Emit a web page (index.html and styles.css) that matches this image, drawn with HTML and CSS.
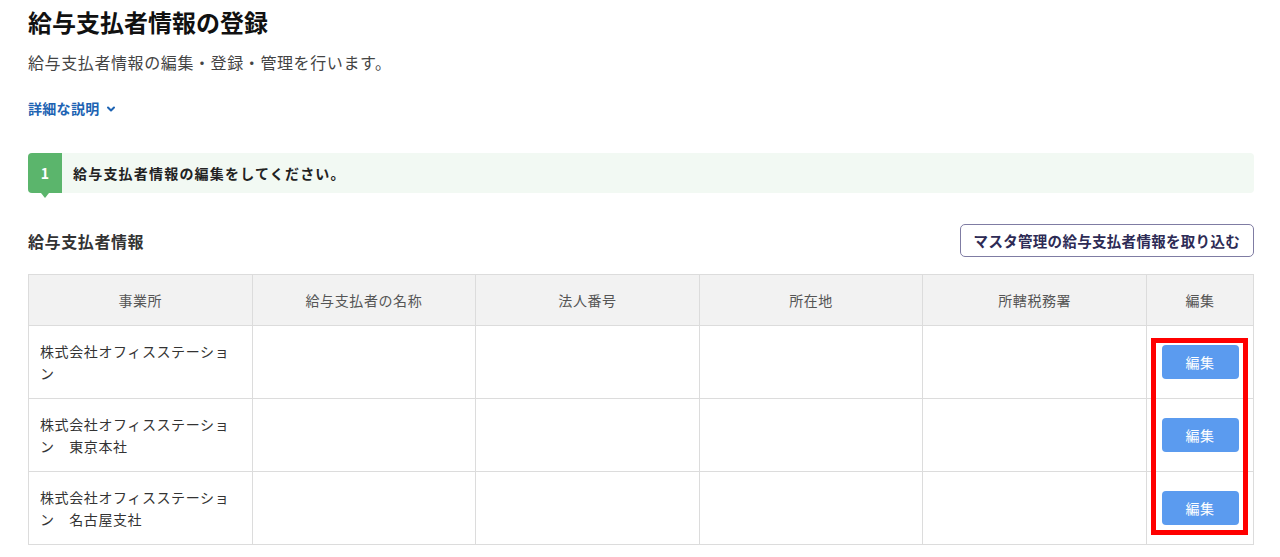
FILE: index.html
```html
<!DOCTYPE html>
<html lang="ja">
<head>
    <meta charset="UTF-8">
    <meta name="viewport" content="width=device-width, initial-scale=1.0">
    <title>給与支払者情報の登録</title>
    <link rel="stylesheet" href="styles.css">
</head>
<body>
    <main class="page">
        <h1 class="title">給与支払者情報の登録</h1>
        <p class="lead">給与支払者情報の編集・登録・管理を行います。</p>
        <a class="more" href="#">詳細な説明
            <svg class="chevron" viewBox="0 0 10 10" width="10" height="10"><path d="M2 3.5 L5 6.5 L8 3.5" fill="none" stroke="currentColor" stroke-width="2" stroke-linecap="round" stroke-linejoin="round"/></svg>
        </a>

        <div class="step">
            <span class="step-num">1</span>
            <p class="step-text">給与支払者情報の編集をしてください。</p>
        </div>

        <div class="section-head">
            <h2 class="section-title">給与支払者情報</h2>
            <button class="import" type="button">マスタ管理の給与支払者情報を取り込む</button>
        </div>

        <div class="table-wrap">
            <table class="payers">
                <thead>
                    <tr>
                        <th class="col">事業所</th>
                        <th class="col">給与支払者の名称</th>
                        <th class="col">法人番号</th>
                        <th class="col">所在地</th>
                        <th class="col">所轄税務署</th>
                        <th class="col-edit">編集</th>
                    </tr>
                </thead>
                <tbody>
                    <tr>
                        <td>株式会社オフィスステーション</td>
                        <td></td><td></td><td></td><td></td>
                        <td class="edit-cell"><button class="edit" type="button">編集</button></td>
                    </tr>
                    <tr>
                        <td>株式会社オフィスステーション　東京本社</td>
                        <td></td><td></td><td></td><td></td>
                        <td class="edit-cell"><button class="edit" type="button">編集</button></td>
                    </tr>
                    <tr>
                        <td>株式会社オフィスステーション　名古屋支社</td>
                        <td></td><td></td><td></td><td></td>
                        <td class="edit-cell"><button class="edit" type="button">編集</button></td>
                    </tr>
                </tbody>
            </table>
            <div class="highlight"></div>
        </div>
    </main>
</body>
</html>
```

FILE: styles.css
```css
body {
    margin: 0;
    font-family: "Noto Sans CJK JP", "Noto Sans", sans-serif;
    color: #333;
    background: #fff;
}
.page {
    padding: 6px 26px 0 28px;
}
.title {
    margin: 0;
    font-size: 24px;
    line-height: 32px;
    font-weight: 700;
    color: #111;
}
.lead {
    margin: 12px 0 0;
    font-size: 16px;
    line-height: 24px;
    letter-spacing: 0.6px;
    color: #444;
}
.more {
    display: inline-flex;
    align-items: center;
    gap: 6px;
    margin-top: 24px;
    font-size: 14px;
    line-height: 20px;
    letter-spacing: 0.3px;
    font-weight: 700;
    color: #1d63b3;
    text-decoration: none;
}
.chevron {
    margin-top: 1px;
}
.step {
    display: flex;
    align-items: center;
    margin-top: 34px;
    height: 40px;
    background: #f2f9f3;
    border-radius: 4px;
}
.step-num {
    position: relative;
    display: flex;
    align-items: center;
    justify-content: center;
    width: 34px;
    height: 40px;
    background: #5bb56c;
    color: #fff;
    font-size: 14px;
    font-weight: 700;
    border-radius: 4px 0 0 4px;
}
.step-num::after {
    content: "";
    position: absolute;
    left: 13px;
    bottom: -5px;
    border-left: 4px solid transparent;
    border-right: 4px solid transparent;
    border-top: 5px solid #5bb56c;
}
.step-text {
    margin: 0 0 0 11px;
    font-size: 14px;
    letter-spacing: 1.2px;
    font-weight: 700;
    color: #222;
}
.section-head {
    display: flex;
    align-items: center;
    justify-content: space-between;
    margin-top: 31px;
}
.section-title {
    margin: 0;
    font-size: 16px;
    letter-spacing: 0.6px;
    font-weight: 700;
    color: #333;
}
.import {
    height: 33px;
    padding: 0 13px;
    background: #fff;
    border: 1px solid #7f7ca3;
    border-radius: 5px;
    font-family: inherit;
    font-size: 14.5px;
    letter-spacing: 0.3px;
    font-weight: 700;
    color: #2d2b55;
}
.table-wrap {
    position: relative;
    margin-top: 17px;
}
.payers {
    width: 100%;
    border-collapse: collapse;
    table-layout: fixed;
    font-size: 14px;
    letter-spacing: 0.6px;
}
.payers th,
.payers td {
    border: 1px solid #dcdcdc;
}
.payers th {
    height: 50px;
    padding: 0 12px;
    background: #f2f2f2;
    font-weight: 400;
    color: #555;
    text-align: center;
}
.payers th.col-edit {
    width: 82px;
}
.payers td {
    height: 72px;
    padding: 0 18px 0 11px;
    line-height: 22px;
    color: #333;
    vertical-align: middle;
}
.payers td.edit-cell {
    padding: 0;
    text-align: center;
}
.edit {
    width: 77px;
    height: 34px;
    background: #5b9bef;
    border: none;
    border-radius: 4px;
    color: #fff;
    font-family: inherit;
    font-size: 14px;
    letter-spacing: 0.6px;
}
.highlight {
    position: absolute;
    left: 1123px;
    top: 64px;
    width: 87px;
    height: 187px;
    border: 5px solid #ff0000;
    pointer-events: none;
}
```
